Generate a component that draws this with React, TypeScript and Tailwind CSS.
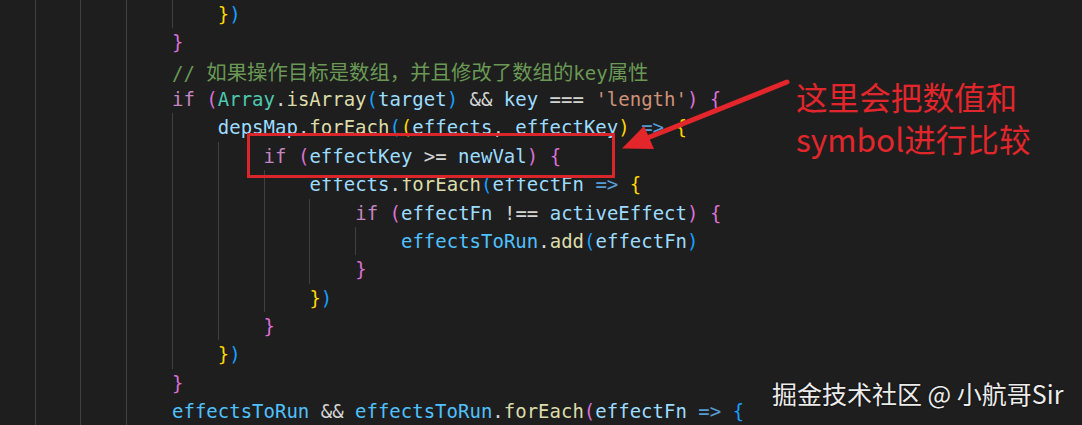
import React from "react";

type Tok = [string, string];

const KW = "text-[#c586c0]";
const ID = "text-[#9cdcfe]";
const CONST = "text-[#4fc1ff]";
const FN = "text-[#dcdcaa]";
const CLS = "text-[#4ec9b0]";
const OP = "text-[#d4d4d4]";
const ARROW = "text-[#569cd6]";
const STR = "text-[#ce9178]";
const COM = "text-[#6a9955]";
const GOLD = "text-[#ffd700]";
const PINK = "text-[#da70d6]";
const BLUE = "text-[#179fff]";

const lines: { indent: number; toks: Tok[]; comment?: boolean }[] = [
  { indent: 5, toks: [["}", GOLD], [")", BLUE]] },
  { indent: 4, toks: [["}", PINK]] },
  { indent: 4, toks: [], comment: true },
  {
    indent: 4,
    toks: [
      ["if", KW], [" ", OP], ["(", PINK], ["Array", CLS], [".", OP], ["isArray", FN], ["(", BLUE],
      ["target", ID], [")", BLUE], [" && ", OP], ["key", ID], [" === ", OP], ["'length'", STR],
      [")", PINK], [" ", OP], ["{", PINK],
    ],
  },
  {
    indent: 5,
    toks: [
      ["depsMap", ID], [".", OP], ["forEach", FN], ["(", BLUE], ["(", GOLD], ["effects", ID], [", ", OP],
      ["effectKey", ID], [")", GOLD], [" ", OP], ["=>", ARROW], [" ", OP], ["{", GOLD],
    ],
  },
  {
    indent: 6,
    toks: [
      ["if", KW], [" ", OP], ["(", PINK], ["effectKey", ID], [" >= ", OP], ["newVal", ID], [")", PINK],
      [" ", OP], ["{", PINK],
    ],
  },
  {
    indent: 7,
    toks: [
      ["effects", ID], [".", OP], ["forEach", FN], ["(", BLUE], ["effectFn", ID], [" ", OP], ["=>", ARROW],
      [" ", OP], ["{", GOLD],
    ],
  },
  {
    indent: 8,
    toks: [
      ["if", KW], [" ", OP], ["(", PINK], ["effectFn", ID], [" !== ", OP], ["activeEffect", ID], [")", PINK],
      [" ", OP], ["{", PINK],
    ],
  },
  {
    indent: 9,
    toks: [["effectsToRun", CONST], [".", OP], ["add", FN], ["(", BLUE], ["effectFn", ID], [")", BLUE]],
  },
  { indent: 8, toks: [["}", PINK]] },
  { indent: 7, toks: [["}", GOLD], [")", BLUE]] },
  { indent: 6, toks: [["}", PINK]] },
  { indent: 5, toks: [["}", GOLD], [")", BLUE]] },
  { indent: 4, toks: [["}", PINK]] },
  {
    indent: 4,
    toks: [
      ["effectsToRun", CONST], [" && ", OP], ["effectsToRun", CONST], [".", OP], ["forEach", FN],
      ["(", PINK], ["effectFn", ID], [" ", OP], ["=>", ARROW], [" ", OP], ["{", BLUE],
    ],
  },
];

const CJK = "font-['Noto_Sans_CJK_SC',sans-serif] text-[20.4px]";

function Comment() {
  return (
    <span className={COM}>
      <span>{"// "}</span>
      <span className={CJK}>如果操作目标是数组，并且修改了数组的</span>
      <span>key</span>
      <span className={CJK}>属性</span>
    </span>
  );
}

export default function App() {
  return (
    <div className="relative w-[1082px] h-[425px] overflow-hidden bg-[#1e1e1e]">
      <div className="flex flex-col ml-[-11.2px] font-['DejaVu_Sans_Mono',monospace] text-[19px] leading-[28.36px] whitespace-pre">
        {lines.map((l, i) => (
          <div key={i} className="flex h-[28.36px] items-stretch">
            {Array.from({ length: l.indent }).map((_, j) => (
              <span key={j} className="w-[45.8px] shrink-0 border-l border-[#404040]" />
            ))}
            <span className="leading-[28.36px]">
              {l.comment ? (
                <Comment />
              ) : (
                l.toks.map((t, k) => (
                  <span key={k} className={t[1]}>
                    {t[0]}
                  </span>
                ))
              )}
            </span>
          </div>
        ))}
      </div>

      {/* red highlight box */}
      <div className="absolute left-[247px] top-[133px] w-[368px] h-[45px] border-[3px] border-[#d9262b]" />

      {/* arrow */}
      <svg className="absolute left-0 top-0" width="1082" height="425" viewBox="0 0 1082 425">
        <line x1="787" y1="82" x2="646" y2="138.5" stroke="#e3262b" strokeWidth="5" strokeLinecap="round" />
        <polygon points="622,148.5 644,126 654,149" fill="#e3262b" />
      </svg>

      {/* annotation text */}
      <div className="absolute left-[796px] top-[75px] font-['Noto_Sans_CJK_SC',sans-serif] text-[31.6px] leading-[42px] text-[#e2262b]">
        <div>这里会把数值和</div>
        <div>symbol进行比较</div>
      </div>

      {/* watermark */}
      <div className="absolute left-[772px] top-[377px] font-['Noto_Sans_CJK_SC',sans-serif] text-[25px] leading-[32px] text-[#ececec] [text-shadow:0_0_2px_rgba(0,0,0,0.8)]">
        掘金技术社区 @ 小航哥Sir
      </div>
    </div>
  );
}
